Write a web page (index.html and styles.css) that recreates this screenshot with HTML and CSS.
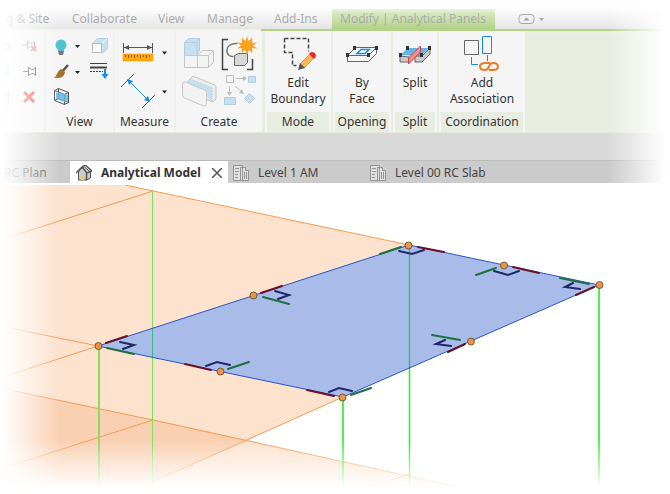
FILE: index.html
```html
<!DOCTYPE html>
<html lang="en">
<head>
<meta charset="utf-8">
<meta name="viewport" content="width=device-width, initial-scale=1">
<title>Analytical Model</title>
<link rel="stylesheet" href="styles.css">
</head>
<body>
<div class="app">
  <nav class="ribbon-tabs" aria-label="Ribbon">
    <button class="tab tab-site">g &amp; Site</button>
    <button class="tab tab-collaborate">Collaborate</button>
    <button class="tab tab-view">View</button>
    <button class="tab tab-manage">Manage</button>
    <button class="tab tab-addins">Add-Ins</button>
    <button class="tab tab-active">Modify | Analytical Panels</button>
    <button class="minimize" aria-label="Minimize ribbon">
      <svg width="28" height="14" viewBox="0 0 28 14"><rect x="1" y="1.500" width="15" height="9" rx="3" fill="#eee" stroke="#999"/><path d="M5.500 7.500 8.500 4.500 11.500 7.500z" fill="#888"/><path d="M21 5h5l-2.500 3z" fill="#999"/></svg>
    </button>
  </nav>

  <section class="ribbon">
    <div class="panel panel-modify">
      <div class="tools">
        <svg width="44" height="80" viewBox="0 0 44 80" fill="none">
          <path d="M3.500 13.500h6v4h-6z" stroke="#777"/><path d="M3 34h6v12H3z" fill="#b9d9ee"/><path d="M2 60v14M5 60v14M8 58v16M1 64h9" stroke="#7fa9c4"/>
          <path d="M22 14h5M27.500 10v8M27.500 11.500h2l1 1h2l2-2v7l-2-2h-2l-1 1h-2" stroke="#aaa"/>
          <path d="M31 15l5 5M36 15l-5 5" stroke="#f08c8c" stroke-width="2"/>
          <path d="M23 40.500h5M28.500 36v9M28.500 37.500h2l1 1h2l2-2v8l-2-2h-2l-1 1h-2" stroke="#444"/>
          <path d="M24 61l10 10M34 61L24 71" stroke="#ef4545" stroke-width="3"/>
        </svg>
      </div>
      <h2 class="panel-title"></h2>
    </div>

    <div class="panel panel-view">
      <div class="tools">
        <svg width="66" height="80" viewBox="0 0 66 80" fill="none">
          <circle cx="15" cy="14" r="5.500" fill="#4fc3cb"/><path d="M12 17h6v4h-6z" fill="#4fc3cb"/><path d="M12.500 20h5v3l-1 1h-3l-1-1z" fill="#777"/>
          <path d="M29 14h5l-2.500 3zM29 40h5l-2.500 3z" fill="#222"/>
          <path d="M46.500 12.500l5-5h10v10l-5 5" fill="#c5e0f1" stroke="#b3cfe2"/><rect x="46.500" y="12.500" width="9" height="9" fill="#fafafa" stroke="#bbb"/><path d="M56 12l5-4" stroke="#fff"/>
          <path d="M15 42l7-8" stroke="#555" stroke-width="2.500"/><path d="M16 38l3 3c-1 7-7 6-11 6 3-2 3-8 8-9z" fill="#a6712f"/>
          <path d="M44 32.500h17" stroke="#444"/><path d="M44 36.500h17" stroke="#444" stroke-width="2"/><path d="M44 40.500h13" stroke="#444" stroke-dasharray="2 1"/><path d="M59 38v6" stroke="#168de8" stroke-width="2"/><path d="M55.500 43h7L59 48z" fill="#168de8"/>
          <path d="M8.500 59.500l4-2 10 4v10l-4 2-10-4zM8.500 59.500l10 4v10M18.500 63.500l4-2M12.500 57.500v10l10 4M8.500 69.500l4-2" stroke="#555"/><path d="M10 62l3-1 9 3v6l-3 1-9-3z" fill="#64b5e6" fill-opacity=".85"/>
        </svg>
      </div>
      <h2 class="panel-title">View</h2>
    </div>

    <div class="panel panel-measure">
      <div class="tools">
        <svg width="58" height="80" viewBox="0 0 58 80" fill="none">
          <path d="M8.500 12v10M37.500 12v10M9 16.500h28" stroke="#555"/><path d="M9 16.500l5-2.500v5zM37 16.500l-5-2.500v5z" fill="#555"/>
          <rect x="8" y="23" width="30" height="7" fill="#ffab0f" stroke="#e79300" stroke-width=".5"/><path d="M10.500 24v2M13.500 24v3M16.500 24v2M19.500 24v3M22.500 24v2M25.500 24v3M28.500 24v2M31.500 24v3M34.500 24v2" stroke="#875900"/>
          <path d="M47 20.500h5l-2.500 3zM47 59.500h5l-2.500 3z" fill="#222"/>
          <path d="M6 56l13-13M27 77l13-13" stroke="#555"/><path d="M14 50l19 19" stroke="#168de8"/><path d="M12 48l6 2-4 4zM35 71l-6-2 4-4z" fill="#168de8"/>
        </svg>
      </div>
      <h2 class="panel-title">Measure</h2>
    </div>

    <div class="panel panel-create">
      <div class="tools">
        <svg width="86" height="80" viewBox="0 0 86 80" fill="none">
          <g stroke="#c6c6c6" fill="#f3f3f3"><path d="M8.500 24.500h13v12h-13zM21.500 24.500l5-5h11v12l-5 5h-11zM21.500 24.500h11v12M32.500 24.500l5-5"/></g>
          <path d="M8.500 11.500l4-4h11v12l-3 5h-12z" fill="#c6e0f0" stroke="#b1cddd"/><path d="M9 11.500h12v12M21 11l3-4" stroke="#b1cddd"/>
          <path d="M52 8.500h-5.500v30H52M71 38.500h5.500V28" stroke="#444" stroke-width="1.500"/>
          <path d="M61.500 12.500c-14-1-13 14-4 13" stroke="#777" stroke-width="1.500"/>
          <path d="M58.500 24.500l4-2h9v9l-3 3h-10z" fill="#d8d8d8" stroke="#666"/>
          <path d="M71 5l1.500 5 4-3.500-.5 5.500 5-.5-4 3 4 3-5-.5.500 5-4-3L71 24l-1.500-5-4 3 .500-5-5 .5 4-3-4-3 5 .5-.5-5.500 4 3.500z" fill="#f9a21c"/>
          <g stroke="#c6c6c6" fill="#ececec"><path d="M14 48l3-3 22 9q1 1 1 3v11l-3 3-21-8z"/><path d="M11 51l3-3 22 9v13" fill="#c6e0f0" stroke="#b7d3e2" stroke-dasharray="2 1"/><path d="M6.500 53q0-3 3-2l19 8q2 1 2 3v11q0 3-3 2l-19-8q-2-1-2-3z" fill="#f2f2f2"/></g>
          <path d="M50.500 44.500h7v7h-7z" fill="#f4f4f4" stroke="#bbb"/><path d="M72.500 45.500h7v6h-7zM48.500 66.500h11v7h-11zM68.500 67.500l5-5 5 5-5 5z" fill="#c6e0f0" stroke="#b1cddd"/><path d="M60 47.500h9M53.500 55v7M59 55l7 6" stroke="#bbb"/><path d="M67 45l4 2.500-4 2.500zM51 61h5l-2.500 4zM68 63l-5-1 3-4z" fill="#bbb"/>
        </svg>
      </div>
      <h2 class="panel-title">Create</h2>
    </div>

    <div class="panel panel-mode contextual">
      <button class="tools command">
        <svg width="40" height="44" viewBox="0 0 40 44" fill="none">
          <path d="M6.500 7.500h24v13M6.500 7.500v14h8v13h4" stroke="#444" stroke-width="1.500" stroke-dasharray="4 2"/>
          <path d="M22 33l10-10 4 4-10 10z" fill="#f8b84e" stroke="#dd9a38"/><path d="M22 32l5 5-7 2z" fill="#555"/><path d="M31 23l2-2q5 0 5 4l-2 3z" fill="#ed252c"/>
        </svg>
        <span>Edit<br>Boundary</span>
      </button>
      <h2 class="panel-title">Mode</h2>
    </div>

    <div class="panel panel-opening contextual">
      <button class="tools command">
        <svg width="40" height="44" viewBox="0 0 40 44" fill="none">
          <path d="M5.500 24.500l8-8h21l-8 8zM5.500 24.500v6h21l8-8v-6" stroke="#666"/>
          <path d="M15 22.500l4-4h8l-4 4z" fill="#fff" stroke="#168de8" stroke-width="1.500"/><path d="M4 22h3v4H4zM11 15h3v4h-3zM25 22h3v4h-3zM33 15h3v4h-3z" fill="#333"/>
        </svg>
        <span>By<br>Face</span>
      </button>
      <h2 class="panel-title">Opening</h2>
    </div>

    <div class="panel panel-split contextual">
      <button class="tools command">
        <svg width="40" height="44" viewBox="0 0 40 44" fill="none">
          <path d="M5 24l8-7h21l-8 8z" fill="#65b4e6"/><path d="M5 25l9 1v5H5zM20 25h7l8-8v6l-8 8h-7z" fill="#c9c9c9" stroke="#666"/>
          <path d="M13.500 27l12-12v6l-12 12z" fill="#f08e8e" stroke="#cf3d46"/><path d="M4 22h3v4H4zM11 15h3v4h-3zM25 22h3v4h-3zM33 15h3v4h-3z" fill="#333"/>
        </svg>
        <span>Split</span>
      </button>
      <h2 class="panel-title">Split</h2>
    </div>

    <div class="panel panel-coordination contextual">
      <button class="tools command">
        <svg width="40" height="44" viewBox="0 0 40 44" fill="none">
          <path d="M2.500 9.500h14v14h-14z" stroke="#666"/><path d="M20.500 5.500h9v17h-9zM9.500 26v7.500H16M25.500 24v6" stroke="#168de8"/>
          <path d="M28 32h-5q-5 0-5 3.500t5 3.500q3 0 4-3.500t4-3.500q5 0 5 3.500T31 39h-4" stroke="#ed7d22" stroke-width="2"/>
        </svg>
        <span>Add<br>Association</span>
      </button>
      <h2 class="panel-title">Coordination</h2>
    </div>
  </section>

  <div class="options-bar"></div>

  <nav class="view-tabs" aria-label="Open views">
    <button class="view-tab view-tab-plan">RC Plan</button>
    <div class="view-tab view-tab-current">
      <svg width="16" height="16" viewBox="0 0 16 16" fill="none" stroke="#555"><path d="M2.500 7v8h8l4-2V7l-6-5-3 1z" fill="#ccc"/><path d="M0 8l6-6 5 6M6 2l3-2 7 6-5 2M10.500 15V7" stroke-width="1.500"/><path d="M5 10h3v5H5z" fill="#f4c84a" stroke="none"/></svg>
      <span>Analytical Model</span>
      <button class="close" aria-label="Close view"><svg width="10" height="10" viewBox="0 0 10 10"><path d="M0 0l10 10M10 0L0 10" stroke="#555" stroke-width="1.500"/></svg></button>
    </div>
    <button class="view-tab view-tab-level">
      <svg width="18" height="18" viewBox="0 0 18 18" fill="none" stroke="#949494"><path d="M1.500 1.500h9v15h-9zM8.500 3.500h5v3h3v10h-8z" fill="#e0e0e0"/><path d="M3 4.500h4M3 7.500h4M3 10.500h3M3 13.500h3M10.500 8v7M12.500 8v7M14.500 8v7"/></svg>
      <span>Level 1 AM</span>
    </button>
    <button class="view-tab view-tab-slab">
      <svg width="18" height="18" viewBox="0 0 18 18" fill="none" stroke="#949494"><path d="M1.500 1.500h9v15h-9zM8.500 3.500h5v3h3v10h-8z" fill="#e0e0e0"/><path d="M3 4.500h4M3 7.500h4M3 10.500h3M3 13.500h3M10.500 8v7M12.500 8v7M14.500 8v7"/></svg>
      <span>Level 00 RC Slab</span>
    </button>
  </nav>

  <main class="drawing">
    <svg viewBox="0 185 670 309" role="img" aria-label="Analytical panel in 3D view">
      <path d="M0 185h125l284 60-66 152-122 55-90 42H0z" fill="#fde2cd"/>
      <path d="M0 388l153 32 93 20-120 54H0z" fill="#fad0b2"/>
      <path d="M246 440l244 54H126z" fill="#fde2cd"/>
      <path d="M125 185l284 60M0 240l153-49M0 326l98 20M0 378l98-32M0 388l153 32 337 74M0 469l153-49M343 397L126 494M409 474l-60 20" fill="none" stroke="#f79a52"/>
      <path d="M152.500 191v303" stroke="#76e557"/><path d="M99 346v148" stroke="#8ed963" stroke-width="2"/>
      <path d="M409 245l190 40-256 112-245-51z" fill="#a9bce9"/>
      <path d="M152.500 329v28" stroke="#2fbd7c"/><path d="M409.500 245v124" stroke="#43b588" stroke-width="1.500"/>
      <path d="M409.500 369v125" stroke="#1df01d" stroke-width="1.500"/><path d="M343 397v97M599 285v209" stroke="#4cf34c" stroke-width="2"/>
      <path d="M409 245l190 40-256 112-245-51z" fill="none" stroke="#2854c9"/>
      <g fill="none" stroke-width="2" stroke-linecap="round">
        <path stroke="#681226" d="M106 343l21-7M261 293l21-7M185 364l26 6M307 390l27 6M418 247l26 5M513 267l26 6M576 295l18-8M448 352l17-8"/>
        <path stroke="#1c713c" d="M107 348l27 6M263 297l26 7M228 369l21-7M351 395l20-7M380 254l21-7M476 275l20-7M560 278l29 6M432 335l28 5"/>
        <path stroke="#202769" d="M120 342l14 3-11 4M275 291l14 4-11 4M206 366l11-4 13 3M329 392l10-4 13 3M399 251l13 3 12-4M494 271l14 4 11-4M573 283l-8 4 15 2M445 340l-9 4 15 2"/>
      </g>
      <g fill="#ec9440" stroke="#77583d"><circle cx="98.500" cy="346" r="3.500"/><circle cx="253.500" cy="295.500" r="3.500"/><circle cx="220.500" cy="371.500" r="3.500"/><circle cx="342.500" cy="397.500" r="3.500"/><circle cx="408.500" cy="245.500" r="3.500"/><circle cx="504" cy="265.500" r="3.500"/><circle cx="599.500" cy="285" r="3.500"/><circle cx="471" cy="341.500" r="3.500"/></g>
    </svg>
  </main>
  <div class="vignette" aria-hidden="true"></div>
</div>
</body>
</html>
```

FILE: styles.css
```css
* { box-sizing: border-box; }
body { margin: 0; background: #fff; color: #333; font: 12px/16px "Noto Sans", "Open Sans", sans-serif; overflow: hidden; }
button { border: 0; padding: 0; background: none; color: inherit; font: inherit; }
svg { display: block; flex-shrink: 0; }
.app { position: relative; min-height: 100vh; overflow: hidden; }
.ribbon-tabs { display: flex; align-items: flex-end; height: 29px; background: linear-gradient(#fff, #fff 4px, #e2e2e2); color: #9c9c9c; }
.tab { height: 20px; text-align: left; white-space: nowrap; flex-shrink: 0; }
.tab-site { width: 72px; padding-left: 6px; color: #808080; }
.tab-collaborate { width: 86px; }
.tab-view { width: 49px; }
.tab-manage { width: 67px; }
.tab-addins { width: 58px; }
.tab-active { padding: 0 8px; width: 163px; background: linear-gradient(#d2e6b6, #abcd7c); }
.minimize { margin-left: 23px; height: 18px; }
.ribbon { display: flex; gap: 2px; height: 104px; padding-top: 2px; background: linear-gradient(90deg, #eff0ea 261px, #e7ede1 261px); position: relative; border-bottom: 1px solid #e2e8da; }
.ribbon::before { content: ""; position: absolute; top: 0; left: 261px; right: 0; height: 2px; background: #add07c; }
.panel { display: flex; flex-direction: column; flex-shrink: 0; background: #f5f5f5; }
.panel-modify { width: 44px; }
.panel-view { width: 67px; }
.panel-measure { width: 59px; }
.panel-create { width: 86px; }
.panel-mode { width: 66px; margin-left: 1px; }
.panel-opening { width: 58px; }
.panel-split { width: 44px; }
.panel-coordination { width: 86px; }
.tools { height: 81px; }
.command { display: flex; flex-direction: column; align-items: center; text-align: center; }
.panel-title { margin: 0; height: 20px; font: inherit; line-height: 20px; text-align: center; }
.contextual .panel-title { margin: 0 2px; background: #e8ede1; }
.options-bar { height: 27px; background: #d9d9d9; }
.view-tabs { display: flex; height: 23px; background: #cbcbcb; border-top: 1px solid #bbb; color: #444; }
.view-tab { display: flex; align-items: center; gap: 8px; white-space: nowrap; padding-top: 2px; }
.view-tab-plan { width: 70px; padding-left: 4px; color: #555; }
.view-tab-current { width: 158px; padding-left: 6px; gap: 9px; background: #fff; font-weight: 700; color: #333; }
.close { margin-left: 2px; }
.view-tab-level { width: 130px; padding-left: 4px; }
.view-tab-slab { padding-left: 11px; }
.drawing { padding-top: 2px; }
.drawing svg { width: 100%; height: auto; }
.vignette { position: absolute; inset: 0; pointer-events: none; background: linear-gradient(90deg, #fff 2px, rgba(255,255,255,.7) 20px, rgba(255,255,255,0) 60px, rgba(255,255,255,0) calc(100% - 62px), #fff calc(100% - 4px)), linear-gradient(0deg, #fff 6px, rgba(255,255,255,.7) 20px, rgba(255,255,255,0) 54px), linear-gradient(#fff 2px, rgba(255,255,255,.2) 14px, rgba(255,255,255,0) 40px); }
```
